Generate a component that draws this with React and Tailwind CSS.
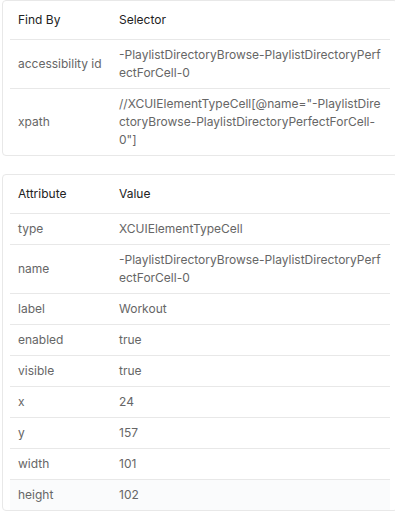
export default function App() {
  const finders = [
    ['accessibility id', '-PlaylistDirectoryBrowse-PlaylistDirectoryPerfectForCell-0'],
    ['xpath', '//XCUIElementTypeCell[@name="-PlaylistDirectoryBrowse-PlaylistDirectoryPerfectForCell-0"]'],
  ]

  const attrs = [
    ['type', 'XCUIElementTypeCell'],
    ['name', '-PlaylistDirectoryBrowse-PlaylistDirectoryPerfectForCell-0'],
    ['label', 'Workout'],
    ['enabled', 'true'],
    ['visible', 'true'],
    ['x', '24'],
    ['y', '157'],
    ['width', '101'],
    ['height', '102'],
  ]

  const Panel = ({ head, rows, hoverLast }) => (
    <div className="ml-[2px] w-[396px] rounded-[4px] border border-[#e8e8e8] bg-white px-[7px]">
      <table className="w-full table-fixed border-collapse text-left">
        <colgroup>
          <col className="w-[101px]" />
          <col />
        </colgroup>
        <thead>
          <tr className="border-b border-[#e8e8e8]">
            <th className="px-2 py-[10px] font-normal text-[#222]">{head[0]}</th>
            <th className="px-2 py-[10px] font-normal text-[#222]">{head[1]}</th>
          </tr>
        </thead>
        <tbody>
          {rows.map(([k, v], i) => {
            const last = i === rows.length - 1
            return (
              <tr
                key={k}
                className={`${last ? '' : 'border-b border-[#e8e8e8]'} ${last && hoverLast ? 'bg-[#fafbfc]' : ''}`}
              >
                <td className="px-2 py-[6px] align-middle text-[#666]">{k}</td>
                <td className="break-all px-2 py-[6px] align-middle text-[#666]">{v}</td>
              </tr>
            )
          })}
        </tbody>
      </table>
    </div>
  )

  return (
    <div className="h-[511px] w-[395px] overflow-hidden bg-white font-['Inter',sans-serif] text-[12px] leading-[18px]">
      <Panel head={['Find By', 'Selector']} rows={finders} />
      <div className="h-[18px]" />
      <Panel head={['Attribute', 'Value']} rows={attrs} hoverLast />
    </div>
  )
}
